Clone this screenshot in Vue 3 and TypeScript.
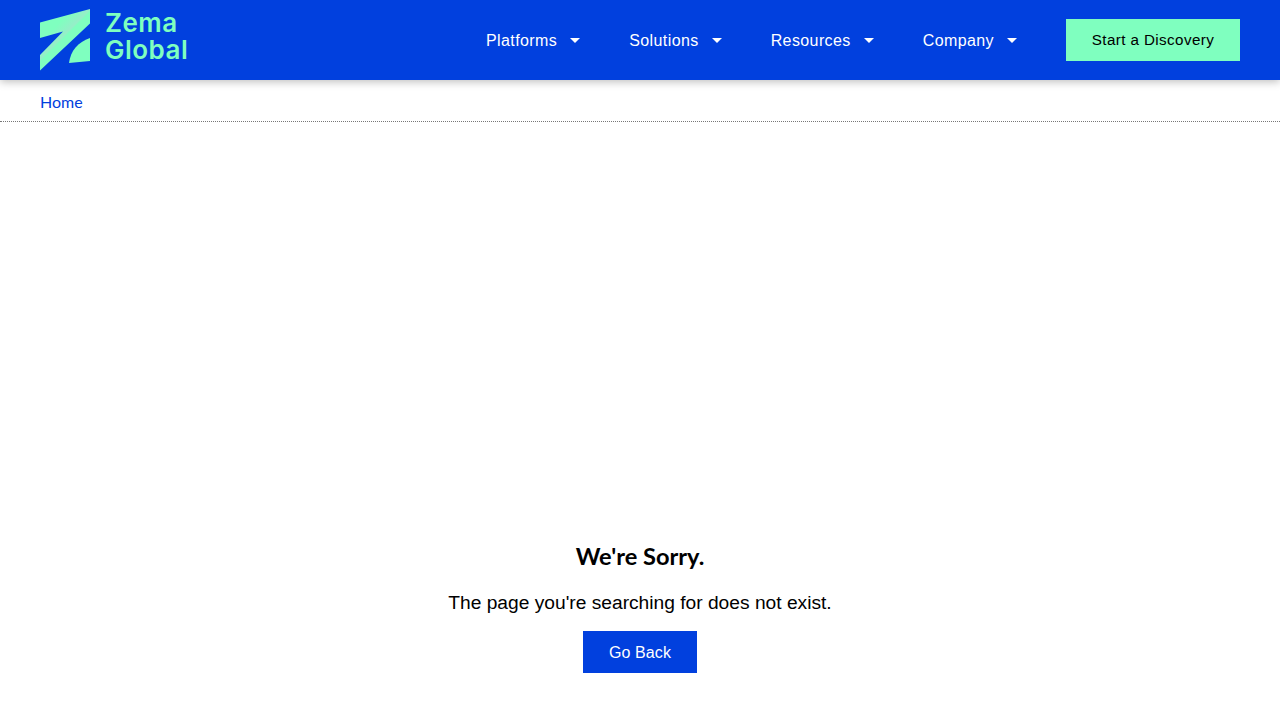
<template>
  <div class="page">
    <header class="topbar">
      <a class="logo" href="#">
        <svg width="50" height="62" viewBox="0 0 50 62" aria-hidden="true">
          <defs>
            <linearGradient id="fold" x1="30" y1="3" x2="40" y2="13" gradientUnits="userSpaceOnUse">
              <stop offset="0" stop-color="#7fffbf" />
              <stop offset="0.85" stop-color="#96eec8" />
              <stop offset="1" stop-color="#7fffbf" />
            </linearGradient>
          </defs>
          <path d="M0 13.5 L50 0 V14.5 L0 61.5 V46 L23 22.5 L0 29 Z" fill="url(#fold)" />
          <path d="M29 54 C30.5 42 38 33 50 29 V52 Z" fill="#7fffbf" />
        </svg>
        <span class="logo-text">Zema<br />Global</span>
      </a>
      <nav class="nav">
        <a v-for="item in navItems" :key="item" class="nav-item" href="#">
          {{ item }}
          <span class="caret"></span>
        </a>
      </nav>
      <a class="discovery" href="#">Start a Discovery</a>
    </header>

    <div class="crumbs">
      <a href="#">Home</a>
    </div>

    <main class="content">
      <h1>We're Sorry.</h1>
      <p>The page you're searching for does not exist.</p>
      <a class="back" href="#">Go Back</a>
    </main>
  </div>
</template>

<script setup lang="ts">
const navItems: string[] = ['Platforms', 'Solutions', 'Resources', 'Company']
</script>

<style>
html,
body {
  margin: 0;
  background: #fff;
}
</style>

<style scoped>
.page {
  height: 720px;
  overflow: hidden;
  font-family: 'Liberation Sans', Arial, sans-serif;
  color: #000;
  display: flex;
  flex-direction: column;
}

a {
  text-decoration: none;
}

.topbar {
  height: 80px;
  flex: none;
  display: flex;
  align-items: center;
  padding: 0 40px;
  background: #0140de;
  box-shadow: 0 2px 8px rgba(0, 0, 0, 0.25);
  position: relative;
}

.logo {
  display: flex;
  align-items: center;
  gap: 15px;
  margin-right: auto;
}

.logo-text {
  font-family: Inter, sans-serif;
  font-weight: 600;
  font-size: 26px;
  line-height: 27px;
  letter-spacing: 0.5px;
  padding-bottom: 8px;
  color: #7fffbf;
}

.nav {
  display: flex;
  gap: 49px;
  margin-right: 49px;
}

.nav-item {
  display: flex;
  align-items: center;
  gap: 13px;
  padding-top: 2px;
  color: #fff;
  font-size: 16px;
  letter-spacing: 0.4px;
}

.caret {
  width: 0;
  height: 0;
  margin-top: -2px;
  border-left: 5.5px solid transparent;
  border-right: 5.5px solid transparent;
  border-top: 5px solid #fff;
}

.discovery {
  width: 174px;
  height: 42px;
  display: flex;
  align-items: center;
  justify-content: center;
  background: #7fffbf;
  color: #000;
  font-size: 15.2px;
  line-height: 18px;
  letter-spacing: 0.4px;
}

.crumbs {
  height: 42px;
  flex: none;
  box-sizing: border-box;
  padding: 12px 40px 0;
  border-bottom: 1px dotted #777;
  font-family: Lato, sans-serif;
  font-size: 16px;
  line-height: 20px;
}

.crumbs a {
  color: #0140de;
}

.content {
  display: flex;
  flex-direction: column;
  align-items: center;
  padding-top: 419px;
}

h1 {
  margin: 0;
  font-family: Lato, sans-serif;
  font-size: 23.6px;
  line-height: 30px;
  font-weight: 700;
}

p {
  margin: 20px 0 0;
  font-size: 19.2px;
  line-height: 24px;
}

.back {
  margin-top: 16px;
  width: 114px;
  height: 42px;
  box-sizing: border-box;
  padding-top: 1px;
  display: flex;
  align-items: center;
  justify-content: center;
  background: #0140de;
  color: #fff;
  font-size: 16px;
  letter-spacing: 0.1px;
}
</style>
